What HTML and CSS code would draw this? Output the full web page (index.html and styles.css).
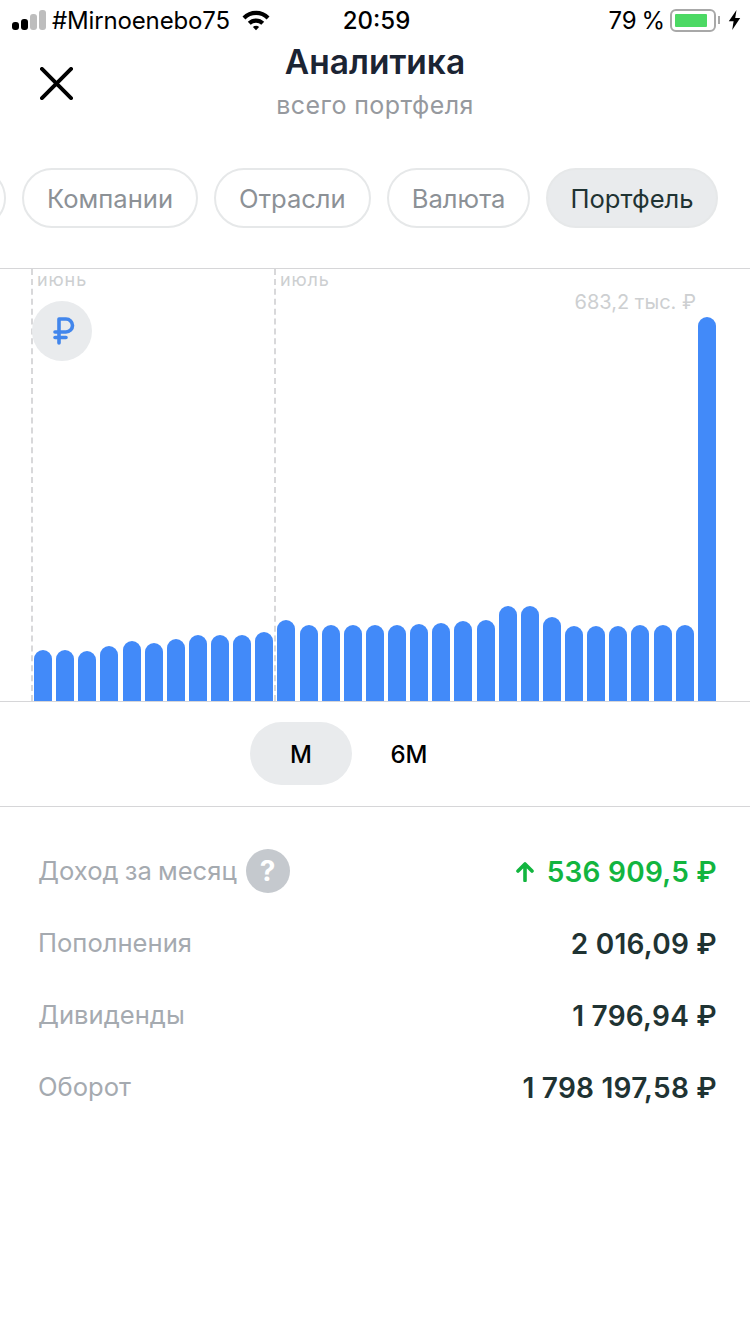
FILE: index.html
```html
<!DOCTYPE html>
<html lang="ru">

<head>
    <meta charset="UTF-8">
    <meta name="viewport" content="width=device-width, initial-scale=1.0">
    <title>Аналитика</title>
    <link rel="stylesheet" href="styles.css">
</head>

<body>

    <div class="status-bar">
        <div class="status-left">
            <div class="signal">
                <span class="signal-bar on s1"></span>
                <span class="signal-bar on s2"></span>
                <span class="signal-bar s3"></span>
                <span class="signal-bar s4"></span>
            </div>
            <span class="carrier">#Mirnoenebo75</span>
            <svg class="wifi" width="30" height="22" viewBox="0 0 30 22">
                <path d="M1.5 7.5 A19 19 0 0 1 28.5 7.5 L25.6 10.5 A15 15 0 0 0 4.4 10.5 Z" fill="#000" />
                <path d="M6.8 12.8 A11.6 11.6 0 0 1 23.2 12.8 L20.3 15.8 A7.6 7.6 0 0 0 9.7 15.8 Z" fill="#000" />
                <path d="M11.9 18 A4.4 4.4 0 0 1 18.1 18 L15 21.2 Z" fill="#000" />
            </svg>
        </div>
        <div class="status-time">20:59</div>
        <div class="status-right">
            <span class="battery-text">79 %</span>
            <div class="battery">
                <div class="battery-level"></div>
            </div>
            <div class="battery-nub"></div>
            <svg class="bolt" width="13" height="20" viewBox="0 0 13 20">
                <path d="M8.5 0 L0.8 11.2 H5.6 L4.2 20 L12.2 8 H7.2 Z" fill="#000" />
            </svg>
        </div>
    </div>

    <div class="header">
        <button class="close-btn">
            <svg width="33" height="33" viewBox="0 0 34 34">
                <path d="M2 2 L32 32 M32 2 L2 32" stroke="#000" stroke-width="4" stroke-linecap="round" fill="none" />
            </svg>
        </button>
        <div class="header-titles">
            <h1>Аналитика</h1>
            <p>всего портфеля</p>
        </div>
    </div>

    <div class="chips">
        <span class="chip chip-cut"></span>
        <span class="chip">Компании</span>
        <span class="chip">Отрасли</span>
        <span class="chip">Валюта</span>
        <span class="chip active">Портфель</span>
    </div>

    <div class="chart">
        <div class="month month-june">июнь</div>
        <div class="month month-july">июль</div>
        <div class="currency">
            <svg width="22" height="28" viewBox="0 0 22 28">
                <path d="M6 26 V2 H13 A6.5 6.5 0 0 1 13 15 H2 M2 20.5 H13" stroke="#4286ec" stroke-width="3.6" stroke-linecap="round" stroke-linejoin="round" fill="none" />
            </svg>
        </div>
        <div class="max-label">683,2 тыс. ₽</div>
        <div class="bars">
            <div class="bar" style="height:51px"></div>
            <div class="bar" style="height:51px"></div>
            <div class="bar" style="height:50px"></div>
            <div class="bar" style="height:55px"></div>
            <div class="bar" style="height:60px"></div>
            <div class="bar" style="height:58px"></div>
            <div class="bar" style="height:62px"></div>
            <div class="bar" style="height:66px"></div>
            <div class="bar" style="height:66px"></div>
            <div class="bar" style="height:66px"></div>
            <div class="bar" style="height:69px"></div>
            <div class="bar" style="height:81px"></div>
            <div class="bar" style="height:76px"></div>
            <div class="bar" style="height:76px"></div>
            <div class="bar" style="height:76px"></div>
            <div class="bar" style="height:76px"></div>
            <div class="bar" style="height:76px"></div>
            <div class="bar" style="height:77px"></div>
            <div class="bar" style="height:78px"></div>
            <div class="bar" style="height:80px"></div>
            <div class="bar" style="height:81px"></div>
            <div class="bar" style="height:95px"></div>
            <div class="bar" style="height:95px"></div>
            <div class="bar" style="height:84px"></div>
            <div class="bar" style="height:75px"></div>
            <div class="bar" style="height:75px"></div>
            <div class="bar" style="height:75px"></div>
            <div class="bar" style="height:76px"></div>
            <div class="bar" style="height:76px"></div>
            <div class="bar" style="height:76px"></div>
            <div class="bar" style="height:384px"></div>
        </div>
    </div>

    <div class="periods">
        <span class="period active">M</span>
        <span class="period">6M</span>
    </div>

    <div class="stats">
        <div class="stat-row">
            <div class="stat-label">Доход за месяц<span class="help">?</span></div>
            <div class="stat-value green">
                <svg class="arrow" width="18" height="20" viewBox="0 0 18 20">
                    <path d="M9 18.5 V2 M2 9 L9 2 L16 9" stroke="#12b53f" stroke-width="3.6" stroke-linecap="round" stroke-linejoin="round" fill="none" />
                </svg>
                <span>536 909,5 ₽</span>
            </div>
        </div>
        <div class="stat-row">
            <div class="stat-label">Пополнения</div>
            <div class="stat-value">2 016,09 ₽</div>
        </div>
        <div class="stat-row">
            <div class="stat-label">Дивиденды</div>
            <div class="stat-value">1 796,94 ₽</div>
        </div>
        <div class="stat-row">
            <div class="stat-label">Оборот</div>
            <div class="stat-value">1 798 197,58 ₽</div>
        </div>
    </div>

</body>

</html>
```

FILE: styles.css
```css
* {
    box-sizing: border-box;
}

body {
    font-family: Inter, "Noto Sans", sans-serif;
    background-color: #ffffff;
    margin: 0;
    width: 750px;
    height: 1334px;
    overflow: hidden;
}

/* Status bar */
.status-bar {
    height: 40px;
    padding: 0 9px 0 12px;
    display: grid;
    grid-template-columns: 1fr auto 1fr;
    align-items: center;
    font-size: 24px;
    color: #000;
}

.status-left {
    display: flex;
    align-items: center;
}

.signal {
    display: flex;
    align-items: flex-end;
    gap: 2px;
    width: 40px;
}

.signal-bar {
    width: 7px;
    background-color: #bdbdbd;
    border-radius: 3px;
}

.signal-bar.on {
    background-color: #000;
}

.s1 { height: 8px; }
.s2 { height: 11px; }
.s3 { height: 16px; }
.s4 { height: 20px; }

.carrier {
    letter-spacing: -0.15px;
}

.wifi {
    margin-left: 11px;
}

.status-time {
    font-weight: 500;
}

.status-right {
    display: flex;
    align-items: center;
    justify-content: flex-end;
}

.battery-text {
    word-spacing: -2px;
}

.battery {
    width: 46px;
    height: 23px;
    margin-left: 5px;
    padding: 3px;
    border: 2px solid #a8a8a8;
    border-radius: 6px;
}

.battery-level {
    width: 32px;
    height: 100%;
    background-color: #4cd964;
    border-radius: 1px;
}

.battery-nub {
    width: 2px;
    height: 8px;
    margin-left: 2px;
    background-color: #a8a8a8;
}

.bolt {
    margin-left: 8px;
}

/* Header */
.header {
    display: grid;
    grid-template-columns: 1fr auto 1fr;
    height: 128px;
}

.close-btn {
    width: 33px;
    height: 33px;
    margin: 27px 0 0 40px;
    padding: 0;
    border: none;
    background: none;
}

.header-titles {
    text-align: center;
}

.header-titles h1 {
    margin: 0;
    font-size: 33.5px;
    line-height: 44px;
    font-weight: 600;
    color: #1b2433;
}

.header-titles p {
    margin: 0;
    font-size: 25px;
    line-height: 42px;
    letter-spacing: 0.4px;
    color: #96999e;
}

/* Chips */
.chips {
    display: flex;
    gap: 16px;
    margin-left: -84px;
    height: 60px;
}

.chip {
    flex: none;
    height: 60px;
    padding: 0 23px;
    display: flex;
    align-items: center;
    border: 2px solid #e6e8e9;
    border-radius: 30px;
    font-size: 25.6px;
    color: #8c9196;
}

.chip-cut {
    width: 90px;
}

.chip.active {
    padding: 0 22px;
    background-color: #e9ebed;
    color: #1f3333;
}

/* Chart */
.chart {
    position: relative;
    height: 434px;
    margin-top: 40px;
    border-top: 1px solid #d6d6d8;
    border-bottom: 1px solid #d6d6d8;
}

.month {
    position: absolute;
    top: 0;
    height: 100%;
    padding: 1px 0 0 4px;
    border-left: 2px dashed #d8d8da;
    font-size: 18px;
    line-height: 20px;
    letter-spacing: 0.9px;
    color: #cdcfd1;
}

.month-june {
    left: 31px;
}

.month-july {
    left: 274px;
}

.currency {
    position: absolute;
    left: 32px;
    top: 32px;
    width: 60px;
    height: 60px;
    padding-left: 4px;
    display: flex;
    align-items: center;
    justify-content: center;
    border-radius: 50%;
    background-color: #e9ebed;
}

.max-label {
    position: absolute;
    right: 54px;
    top: 21px;
    font-size: 20px;
    line-height: 24px;
    color: #cdcfd1;
}

.bars {
    position: absolute;
    left: 34px;
    right: 34px;
    bottom: 0;
    display: flex;
    align-items: flex-end;
    justify-content: space-between;
}

.bar {
    width: 18px;
    background-color: #428af9;
    border-radius: 9px 9px 0 0;
}

/* Period switch */
.periods {
    height: 105px;
    padding: 20px 0 0 250px;
    display: flex;
    border-bottom: 1px solid #d6d6d8;
}

.period {
    width: 102px;
    height: 63px;
    margin-right: 6px;
    padding-top: 2px;
    display: flex;
    align-items: center;
    justify-content: center;
    border-radius: 32px;
    font-size: 24px;
    font-weight: 500;
    color: #000;
}

.period.active {
    background-color: #e9ebed;
}

/* Stats */
.stats {
    padding: 29px 33px 0 38px;
}

.stat-row {
    height: 72px;
    display: flex;
    align-items: center;
    justify-content: space-between;
    font-size: 25.6px;
}

.stat-label {
    display: flex;
    align-items: center;
    gap: 9px;
    margin-bottom: 3px;
    word-spacing: -1px;
    color: #a5aab0;
    white-space: nowrap;
}

.help {
    width: 44px;
    height: 44px;
    display: flex;
    align-items: center;
    justify-content: center;
    border-radius: 50%;
    background-color: #c5c9ce;
    color: #fff;
    font-weight: 700;
    font-size: 28px;
}

.stat-value {
    display: flex;
    align-items: center;
    font-weight: 600;
    font-size: 28px;
    letter-spacing: 0.25px;
    color: #1f3333;
    white-space: nowrap;
}

.stat-value.green {
    color: #12b53f;
}

.arrow {
    margin-right: 13px;
}
```
